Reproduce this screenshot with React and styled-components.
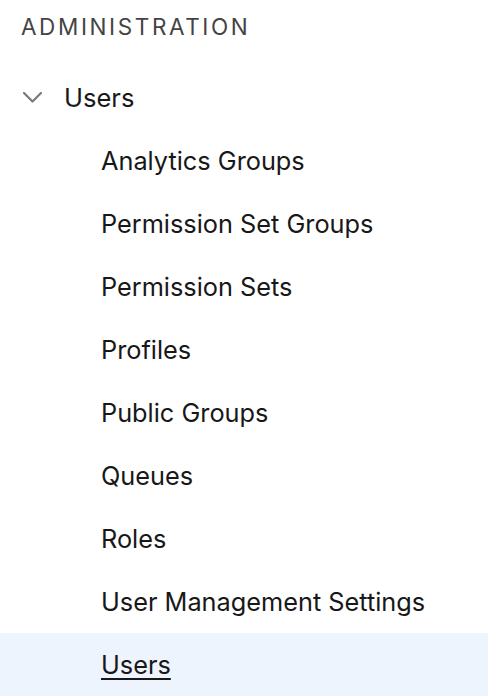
import React from "react";
import styled, { createGlobalStyle } from "styled-components";

const Global = createGlobalStyle`
  html, body { margin: 0; padding: 0; background: #fff; }
  body { font-family: Inter, "Noto Sans", sans-serif; -webkit-font-smoothing: antialiased; }
`;

const Nav = styled.nav`
  display: flex;
  flex-direction: column;
  width: 488px;
`;

const Heading = styled.h2`
  margin: 0;
  padding: 13px 0 0 21px;
  height: 66px;
  box-sizing: border-box;
  font-size: 22.5px;
  line-height: 28px;
  font-weight: 400;
  letter-spacing: 2.6px;
  color: #444;
`;

const GroupRow = styled.div`
  display: flex;
  align-items: center;
  height: 63px;
  padding-left: 23px;
  gap: 22px;
  font-size: 25.5px;
  color: #181818;
`;

const List = styled.ul`
  list-style: none;
  margin: 0;
  padding: 0;
  display: flex;
  flex-direction: column;
`;

const Item = styled.li`
  display: flex;
  align-items: center;
  height: 63px;
  padding-left: 101px;
  font-size: 25.3px;
  color: #181818;
  background: ${(p) => (p.$active ? "#eef4fd" : "transparent")};
  text-decoration: ${(p) => (p.$active ? "underline" : "none")};
  text-underline-offset: 4px;
  text-decoration-thickness: 2px;
`;

const Chevron = () => (
  <svg width="19" height="11" viewBox="0 0 19 11" fill="none">
    <path d="M1 1 L9.5 9.5 L18 1" stroke="#7a7a7a" strokeWidth="2.2" strokeLinecap="round" strokeLinejoin="round" />
  </svg>
);

const items = [
  "Analytics Groups",
  "Permission Set Groups",
  "Permission Sets",
  "Profiles",
  "Public Groups",
  "Queues",
  "Roles",
  "User Management Settings",
  "Users",
];

export default function App() {
  return (
    <>
      <Global />
      <Nav>
        <Heading>ADMINISTRATION</Heading>
        <GroupRow>
          <Chevron />
          <span>Users</span>
        </GroupRow>
        <List>
          {items.map((t, i) => (
            <Item key={t} $active={i === items.length - 1}>{t}</Item>
          ))}
        </List>
      </Nav>
    </>
  );
}
